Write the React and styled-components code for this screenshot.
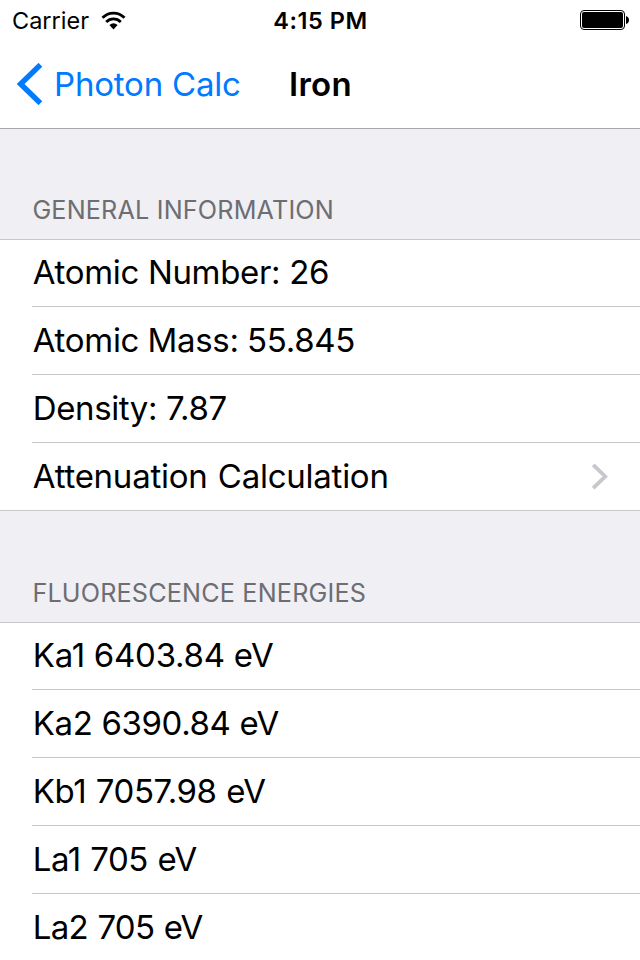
import React from "react";
import styled, { createGlobalStyle } from "styled-components";

const Global = createGlobalStyle`
  *{box-sizing:border-box}
  body{margin:0;background:#efeff4;font-family:Inter,"Liberation Sans",sans-serif;color:#000;overflow:hidden}
`;
const Screen = styled.main`width:640px;height:960px;overflow:hidden;background:#efeff4;`;
const Header = styled.header`height:129px;background:#fff;border-bottom:1px solid #a7a7aa;`;
const Status = styled.div`
  height:40px;display:grid;grid-template-columns:1fr auto 1fr;align-items:center;padding:0 11px 0 12px;
`;
const Carrier = styled.div`display:flex;align-items:center;gap:12px;padding-top:2px;`;
const Wifi = styled.svg`margin-bottom:2px;`;
const Time = styled.div`padding-top:2px;`;
const Battery = styled.svg`justify-self:end;`;
const Label = styled.span`
  display:block;white-space:nowrap;line-height:${p => p.$line || 40}px;
  font-size:${p => p.$size}px;font-weight:${p => p.$weight || 400};
  letter-spacing:${p => p.$track || 0}px;word-spacing:${p => p.$word || 0}px;color:${p => p.$color || "inherit"};
`;
const Nav = styled.nav`height:88px;display:flex;align-items:center;padding-left:17px;`;
const Back = styled.div`display:flex;align-items:center;gap:11px;width:272px;`;
const SectionTitle = styled.h2`
  margin:0;height:${p => p.$height}px;padding:0 0 14px 32.4px;display:flex;align-items:flex-end;
`;
const List = styled.div`background:#fff;border-top:1px solid #c8c7cc;border-bottom:1px solid #c8c7cc;`;
const Row = styled.div`
  height:68px;margin-left:32px;padding:0 32px 1px 0.8px;display:flex;align-items:center;justify-content:space-between;
  border-bottom:1px solid #c8c7cc;
  &:first-child{height:67px;padding-bottom:2px}
  &:last-child{border-bottom:0;height:67px}
`;
const Disclosure = styled.svg`flex:none;`;

const general = [
  { text: "Atomic Number: 26", track: -0.33 },
  { text: "Atomic Mass: 55.845", track: -0.3, word: -0.6 },
  { text: "Density: 7.87", track: -0.4 },
  { text: "Attenuation Calculation", track: -0.25, word: 1.3, link: true },
];
const energies = [
  { text: "Ka1 6403.84 eV", track: -0.26 },
  { text: "Ka2 6390.84 eV", track: -0.38 },
  { text: "Kb1 7057.98 eV", track: -0.42, word: 0.7 },
  { text: "La1 705 eV", track: -0.5, word: 0.9 },
  { text: "La2 705 eV", track: -0.7, word: 0.8 },
];

function Rows({ items }) {
  return <List>{items.map(({ text, track, word, link }) => (
    <Row key={text}>
      <Label $size={33} $track={track} $word={word}>{text}</Label>
      {link && <Disclosure width="17" height="27" viewBox="0 0 17 27"><path d="M2.2 1.8L14.2 13.5L2.2 25.2" fill="none" stroke="#c7c7cc" strokeWidth="3.8" /></Disclosure>}
    </Row>
  ))}</List>;
}

export default function App() {
  return <Screen>
    <Global />
    <Header>
      <Status>
        <Carrier>
          <Label $size={23.5} $line={28}>Carrier</Label>
          <Wifi width="25" height="19" viewBox="0 0 24 19">
            <g fill="none" stroke="#000" strokeWidth="2.8">
              <path d="M1 6.8C7.1.5 16.9.5 23 6.8" />
              <path d="M4.7 10.9C8.8 6.8 15.2 6.8 19.3 10.9" />
            </g>
            <path d="M7.9 14.1Q12 10.5 16.1 14.1L12 18.4Z" />
          </Wifi>
        </Carrier>
        <Time><Label $size={23.5} $line={28} $weight={600} $track={0.55}>4:15 PM</Label></Time>
        <Battery width="49" height="20" viewBox="0 0 49 20"><rect x=".5" y=".5" width="44" height="19" rx="3.5" fill="none" stroke="#000" /><rect x="2" y="2" width="41" height="16" rx="2" /><path d="M46 6Q49 7 49 10T46 14Z" /></Battery>
      </Status>
      <Nav>
        <Back>
          <svg width="26" height="42" viewBox="0 0 26 42"><path d="M23.4 1.8L3.6 21L23.4 40.2" fill="none" stroke="#007aff" strokeWidth="5.4" /></svg>
          <Label $size={33} $track={-0.2} $color="#007aff">Photon Calc</Label>
        </Back>
        <Label $size={33} $weight={600} $track={0.3}>Iron</Label>
      </Nav>
    </Header>
    <SectionTitle $height={110}><Label $size={25.2} $line={30} $track={0.17} $color="#6d6d72">GENERAL INFORMATION</Label></SectionTitle>
    <Rows items={general} />
    <SectionTitle $height={111}><Label $size={25.2} $line={30} $track={0.17} $color="#6d6d72">FLUORESCENCE ENERGIES</Label></SectionTitle>
    <Rows items={energies} />
  </Screen>;
}
